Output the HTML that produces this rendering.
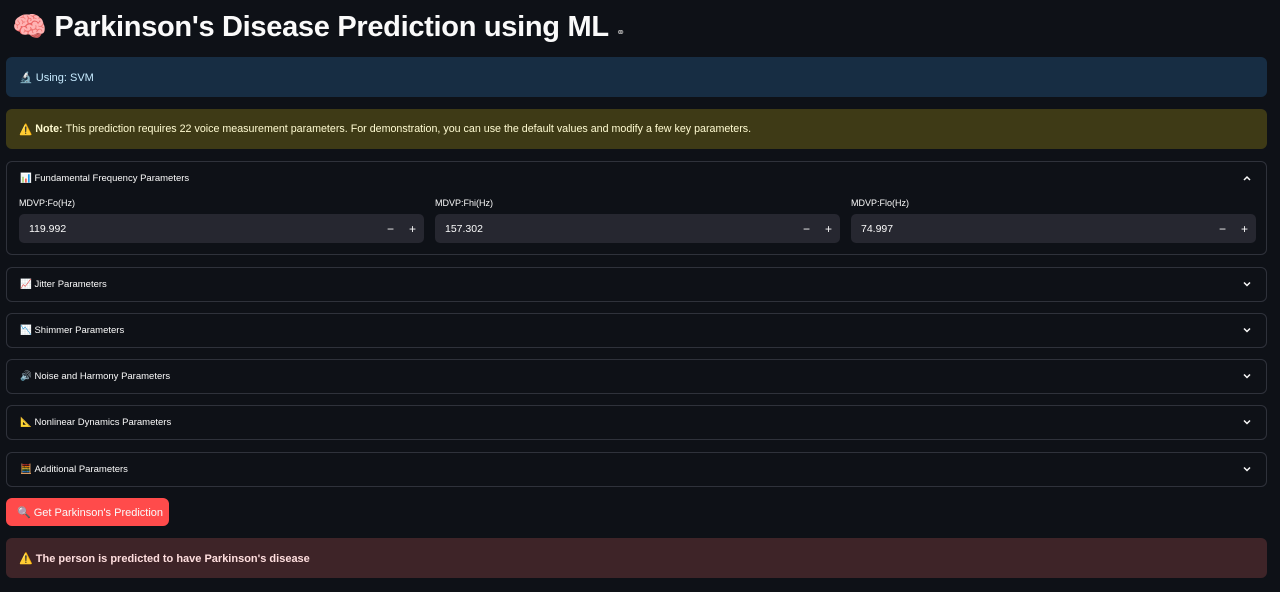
<!DOCTYPE html>
<html><head><style>
*{box-sizing:border-box;margin:0;padding:0}
body{width:1280px;height:592px;overflow:hidden;background:#0e1117;color:#fafafa;font-family:"Liberation Sans",sans-serif;position:relative}
.abs{position:absolute}
h1{position:absolute;left:12px;top:10px;font-size:29px;font-weight:bold;letter-spacing:-0.3px;white-space:nowrap}
.box{position:absolute;left:6px;width:1261px;height:40px;border-radius:6px;font-size:11px;padding-left:13px;display:flex;align-items:center}
.exp{position:absolute;left:6px;width:1261px;border:1px solid #2f323b;border-radius:6px;font-size:9.5px}
.exp .hd{height:33px;display:flex;align-items:center;padding-left:13px}
.chev{position:absolute;right:14px;top:11px;width:10px;height:10px}
.lbl{position:absolute;font-size:9px;top:36px}
.inp{position:absolute;top:52px;height:29px;background:#262730;border-radius:5px;font-size:10.5px;padding-left:10px;display:flex;align-items:center;width:405px}
.inp span{position:absolute;font-size:12px}
</style></head><body>
<h1><span style="font-size:28px">🧠</span> Parkinson's Disease Prediction using ML <span style="font-size:11px;color:#aaa;font-weight:normal">⚭</span></h1>
<div class="box" style="top:57px;background:#172d43;color:#c7ebff">🔬&nbsp;Using: SVM</div>
<div class="box" style="top:109px;background:#3e3a16;color:#fffbd1;font-size:10.7px">⚠️&nbsp;<b>Note:</b>&nbsp;This prediction requires 22 voice measurement parameters. For demonstration, you can use the default values and modify a few key parameters.</div>
<div class="exp" style="top:161px;height:94px"><div class="hd">📊&nbsp;Fundamental Frequency Parameters</div>
<svg class="chev" viewBox="0 0 10 10"><path d="M2 7L5 4L8 7" stroke="#fafafa" stroke-width="1.5" fill="none"/></svg>
<div class="lbl" style="left:12px">MDVP:Fo(Hz)</div><div class="lbl" style="left:428px">MDVP:Fhi(Hz)</div><div class="lbl" style="left:844px">MDVP:Flo(Hz)</div>
<div class="inp" style="left:12px">119.992<span style="right:30px">−</span><span style="right:8px">+</span></div>
<div class="inp" style="left:428px">157.302<span style="right:30px">−</span><span style="right:8px">+</span></div>
<div class="inp" style="left:844px">74.997<span style="right:30px">−</span><span style="right:8px">+</span></div>
</div>
<div class="exp" style="top:267px;height:35px"><div class="hd">📈&nbsp;Jitter Parameters</div><svg class="chev" viewBox="0 0 10 10"><path d="M2 3.5L5 6.5L8 3.5" stroke="#fafafa" stroke-width="1.5" fill="none"/></svg></div>
<div class="exp" style="top:313px;height:35px"><div class="hd">📉&nbsp;Shimmer Parameters</div><svg class="chev" viewBox="0 0 10 10"><path d="M2 3.5L5 6.5L8 3.5" stroke="#fafafa" stroke-width="1.5" fill="none"/></svg></div>
<div class="exp" style="top:359px;height:35px"><div class="hd">🔊&nbsp;Noise and Harmony Parameters</div><svg class="chev" viewBox="0 0 10 10"><path d="M2 3.5L5 6.5L8 3.5" stroke="#fafafa" stroke-width="1.5" fill="none"/></svg></div>
<div class="exp" style="top:405px;height:35px"><div class="hd">📐&nbsp;Nonlinear Dynamics Parameters</div><svg class="chev" viewBox="0 0 10 10"><path d="M2 3.5L5 6.5L8 3.5" stroke="#fafafa" stroke-width="1.5" fill="none"/></svg></div>
<div class="exp" style="top:452px;height:35px"><div class="hd">🧮&nbsp;Additional Parameters</div><svg class="chev" viewBox="0 0 10 10"><path d="M2 3.5L5 6.5L8 3.5" stroke="#fafafa" stroke-width="1.5" fill="none"/></svg></div>
<div class="abs" style="left:6px;top:498px;width:163px;height:28px;background:#ff4b4b;border-radius:6px;font-size:11px;display:flex;align-items:center;padding-left:11px">🔍&nbsp;Get Parkinson's Prediction</div>
<div class="box" style="top:538px;background:#3e2428;color:#ffdede;font-weight:bold">⚠️&nbsp;The person is predicted to have Parkinson's disease</div>
</body></html>
